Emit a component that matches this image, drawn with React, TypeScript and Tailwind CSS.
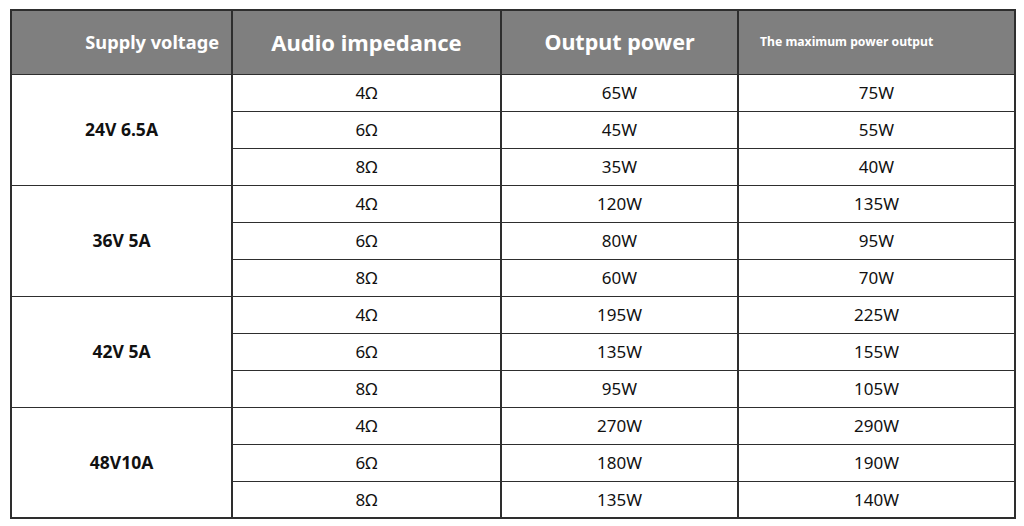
import React from "react";

const groups = [
  { v: "24V 6.5A", rows: [["4Ω", "65W", "75W"], ["6Ω", "45W", "55W"], ["8Ω", "35W", "40W"]] },
  { v: "36V 5A", rows: [["4Ω", "120W", "135W"], ["6Ω", "80W", "95W"], ["8Ω", "60W", "70W"]] },
  { v: "42V 5A", rows: [["4Ω", "195W", "225W"], ["6Ω", "135W", "155W"], ["8Ω", "95W", "105W"]] },
  { v: "48V10A", rows: [["4Ω", "270W", "290W"], ["6Ω", "180W", "190W"], ["8Ω", "135W", "140W"]] },
];

export default function App() {
  const cell = "border-x-2 border-y-[1.5px] border-[#2e2e2e] text-center p-0";
  return (
    <div className="w-[1024px] h-[526px] bg-white pt-[9px] pl-[10px]" style={{ fontFamily: '"Noto Sans", "Liberation Sans", sans-serif' }}>
      <table className="border-collapse table-fixed w-[1004px] border-2 border-[#2e2e2e]">
        <colgroup>
          <col className="w-[221px]" />
          <col className="w-[269px]" />
          <col className="w-[237px]" />
          <col className="w-[277px]" />
        </colgroup>
        <thead>
          <tr className="h-[64px] bg-[#7f7f7f] text-white font-bold">
            <th className={`${cell} text-[18.2px] text-right pr-[12px]`}>Supply voltage</th>
            <th className={`${cell} text-[22px]`}>Audio impedance</th>
            <th className={`${cell} text-[21.5px]`}>Output power</th>
            <th className={`${cell} text-[12.2px] text-left pl-[21px]`}>The maximum power output</th>
          </tr>
        </thead>
        <tbody className="text-[#111] text-[17px]">
          {groups.map((g) =>
            g.rows.map((r, i) => (
              <tr key={g.v + i} className="h-[37px]">
                {i === 0 && (
                  <td rowSpan={3} className={`${cell} font-bold text-[17.5px]`}>
                    {g.v}
                  </td>
                )}
                <td className={cell}>{r[0]}</td>
                <td className={cell}>{r[1]}</td>
                <td className={cell}>{r[2]}</td>
              </tr>
            ))
          )}
        </tbody>
      </table>
    </div>
  );
}
